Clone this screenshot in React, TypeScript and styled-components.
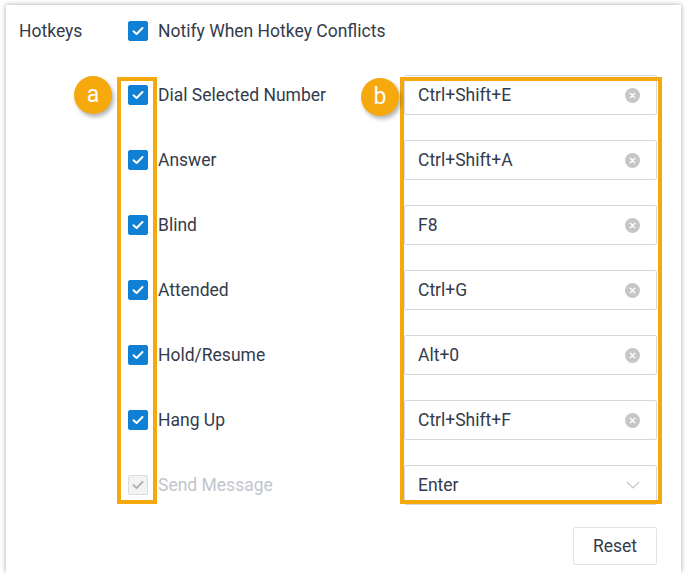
import { createGlobalStyle, styled } from "styled-components";

const GlobalStyle = createGlobalStyle`
  html, body {
    margin: 0;
    padding: 0;
    background: #ffffff;
  }
  body {
    font-family: Roboto, "Liberation Sans", sans-serif;
  }
`;

const ORANGE = "#f6a90d";
const BLUE = "#0f80d4";
const TEXT = "#343b4b";

const Panel = styled.div`
  position: relative;
  box-sizing: border-box;
  margin: 5px 0 0 6px;
  width: 675px;
  height: 568px;
  background: #fff;
  box-shadow: 0 0 5px rgba(0, 0, 0, 0.35);
  padding: 6px 24px 8px 13px;
  display: flex;
  flex-direction: column;
  gap: 25px;
  color: ${TEXT};
  font-size: 17.5px;
`;

const Row = styled.div<{ $indent?: boolean }>`
  display: flex;
  align-items: center;
  height: 40px;
  padding-left: ${(p) => (p.$indent ? "109px" : "0")};
`;

const Label = styled.div`
  width: 109px;
`;

const Check = styled.span<{ $disabled?: boolean }>`
  box-sizing: border-box;
  width: 20px;
  height: 20px;
  border-radius: 2px;
  display: inline-flex;
  align-items: center;
  justify-content: center;
  flex: none;
  background: ${(p) => (p.$disabled ? "#f3f3f3" : BLUE)};
  border: 1px solid ${(p) => (p.$disabled ? "#dcdcdc" : BLUE)};
  margin-right: 10px;
`;

const Name = styled.span<{ $disabled?: boolean }>`
  width: 246px;
  flex: none;
  color: ${(p) => (p.$disabled ? "#c2c5cc" : TEXT)};
`;

const Field = styled.div`
  box-sizing: border-box;
  width: 253px;
  height: 40px;
  flex: none;
  border: 1px solid #d6d8e1;
  border-radius: 2px;
  display: flex;
  align-items: center;
  padding: 0 16px 0 13px;
  background: #fff;
`;

const FieldText = styled.span`
  flex: 1;
`;

const Footer = styled.div`
  display: flex;
  justify-content: flex-end;
  margin-top: -3px;
`;

const Button = styled.button`
  width: 84px;
  height: 38px;
  background: #fff;
  border: 1px solid #e1e3e8;
  border-radius: 2px;
  font-family: inherit;
  font-size: 17.5px;
  color: ${TEXT};
`;

const Frame = styled.div<{ $left: number; $width: number }>`
  position: absolute;
  box-sizing: border-box;
  left: ${(p) => p.$left}px;
  top: 72px;
  width: ${(p) => p.$width}px;
  height: 427px;
  border: 4px solid ${ORANGE};
  pointer-events: none;
`;

const Badge = styled.div<{ $left: number; $top: number }>`
  position: absolute;
  left: ${(p) => p.$left}px;
  top: ${(p) => p.$top}px;
  width: 38px;
  height: 38px;
  border-radius: 50%;
  background: ${ORANGE};
  box-shadow: 2px 3px 4px rgba(0, 0, 0, 0.3);
  color: #fff;
  font-size: 23px;
  display: flex;
  align-items: center;
  justify-content: center;
  line-height: 1;
  padding-bottom: 2px;
  box-sizing: border-box;
`;

function CheckMark({ disabled }: { disabled?: boolean }) {
  return (
    <svg width="12" height="10" viewBox="0 0 12 10">
      <path
        d="M1.5 5.2 L4.6 8 L10.5 2"
        fill="none"
        stroke={disabled ? "#b3b3b3" : "#fff"}
        strokeWidth="2"
        strokeLinecap="round"
        strokeLinejoin="round"
      />
    </svg>
  );
}

function ClearIcon() {
  return (
    <svg width="15" height="15" viewBox="0 0 15 15">
      <circle cx="7.5" cy="7.5" r="7.5" fill="#c6c6c6" />
      <path d="M5.2 5.2 L9.8 9.8 M9.8 5.2 L5.2 9.8" stroke="#fff" strokeWidth="1.3" strokeLinecap="round" />
    </svg>
  );
}

function Chevron() {
  return (
    <svg width="14" height="8" viewBox="0 0 14 8">
      <path d="M1 1 L7 7 L13 1" fill="none" stroke="#c3c6cd" strokeWidth="1.2" />
    </svg>
  );
}

const hotkeys = [
  { name: "Dial Selected Number", key: "Ctrl+Shift+E" },
  { name: "Answer", key: "Ctrl+Shift+A" },
  { name: "Blind", key: "F8" },
  { name: "Attended", key: "Ctrl+G" },
  { name: "Hold/Resume", key: "Alt+0" },
  { name: "Hang Up", key: "Ctrl+Shift+F" },
];

export default function App() {
  return (
    <>
      <GlobalStyle />
      <Panel>
        <Row>
          <Label>Hotkeys</Label>
          <Check>
            <CheckMark />
          </Check>
          <span>Notify When Hotkey Conflicts</span>
        </Row>
        {hotkeys.map((h) => (
          <Row $indent key={h.name}>
            <Check>
              <CheckMark />
            </Check>
            <Name>{h.name}</Name>
            <Field>
              <FieldText>{h.key}</FieldText>
              <ClearIcon />
            </Field>
          </Row>
        ))}
        <Row $indent>
          <Check $disabled>
            <CheckMark disabled />
          </Check>
          <Name $disabled>Send Message</Name>
          <Field>
            <FieldText>Enter</FieldText>
            <Chevron />
          </Field>
        </Row>
        <Footer>
          <Button>Reset</Button>
        </Footer>

        <Frame $left={111} $width={40} />
        <Frame $left={394} $width={262} />
        <Badge $left={68} $top={71}>a</Badge>
        <Badge $left={355} $top={73}>b</Badge>
      </Panel>
    </>
  );
}
